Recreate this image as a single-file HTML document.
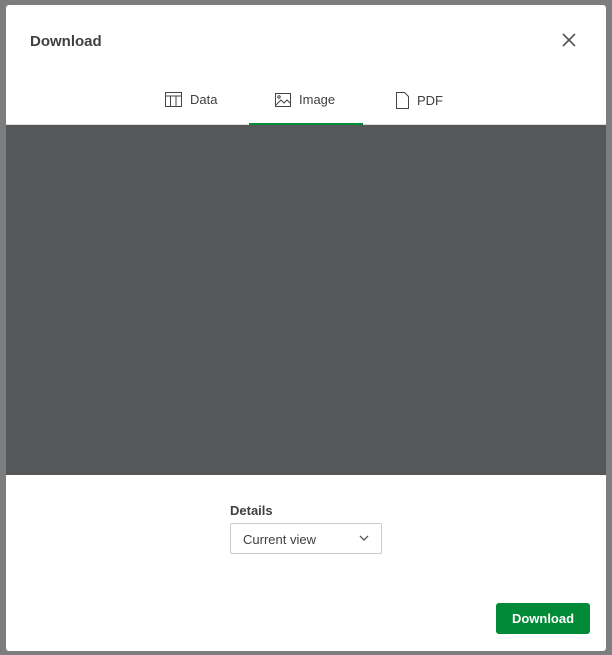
<!DOCTYPE html>
<html><head><style>
body{margin:0;width:612px;height:655px;background:#7d7d7d;position:relative;overflow:hidden;font-family:"Liberation Sans",sans-serif;}
.dlg{position:absolute;left:6px;top:5px;width:600px;height:646px;background:#fff;border-radius:3px;overflow:hidden}
.title{position:absolute;left:24px;top:28px;font-size:15px;color:#404040;font-weight:bold;letter-spacing:0}
.x{position:absolute;left:556px;top:28px}
.tab{position:absolute;top:87px;font-size:13px;color:#404040;display:flex;align-items:center;gap:8px}
.line{position:absolute;left:0;top:119px;width:600px;height:1px;background:#ddd}
.ul{position:absolute;left:243px;top:118px;width:114px;height:3px;background:#008936}
.pane{position:absolute;left:0;top:120px;width:600px;height:350px;background:#54585b}
.lbl{position:absolute;left:224px;top:498px;font-size:13px;color:#404040;font-weight:bold}
.sel{position:absolute;left:224px;top:518px;width:152px;height:31px;border:1px solid #ccc;border-radius:2px;font-size:13px;color:#404040;box-sizing:border-box;padding:8px 12px}
.btn{position:absolute;left:490px;top:598px;width:94px;height:31px;background:#008936;border-radius:3px;color:#fff;font-weight:bold;font-size:13px;text-align:center;line-height:31px}
</style></head><body>
<div class="dlg">
<div class="title">Download</div>
<svg class="x" width="14" height="14" viewBox="0 0 14 14"><path d="M1 1L13 13M13 1L1 13" stroke="#555" stroke-width="1.6"/></svg>
<div class="tab" style="left:159px"><svg width="17" height="15" viewBox="0 0 17 15"><rect x="0.5" y="0.5" width="16" height="14" fill="none" stroke="#444"/><path d="M0.5 4H16.5M5.5 4V14.5M11 4V14.5" stroke="#444" fill="none"/></svg>Data</div>
<div class="tab" style="left:269px"><svg width="16" height="14" viewBox="0 0 16 14"><rect x="0.5" y="0.5" width="15" height="13" fill="none" stroke="#444"/><path d="M1 12L6 7L9 10L12 7L15 10" stroke="#444" fill="none"/><circle cx="4" cy="4" r="1.2" fill="none" stroke="#444"/></svg>Image</div>
<div class="tab" style="left:390px"><svg width="13" height="17" viewBox="0 0 13 17"><path d="M0.5 0.5H8.5L12.5 4.5V16.5H0.5Z" fill="none" stroke="#444"/></svg>PDF</div>
<div class="line"></div><div class="ul"></div>
<div class="pane"></div>
<div class="lbl">Details</div>
<div class="sel">Current view<svg style="position:absolute;right:12px;top:11px" width="10" height="6" viewBox="0 0 10 6"><path d="M1 1L5 5L9 1" stroke="#555" fill="none" stroke-width="1.3"/></svg></div>
<div class="btn">Download</div>
</div>
</body></html>
